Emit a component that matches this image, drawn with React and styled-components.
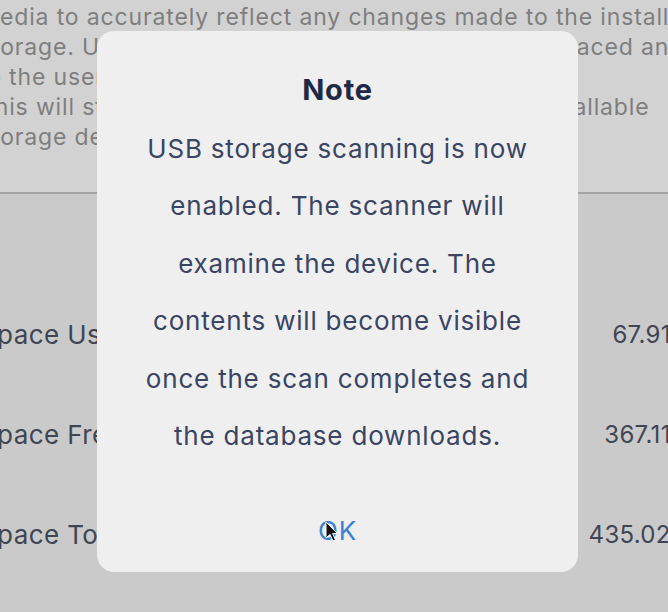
import React from 'react';
import styled, { createGlobalStyle } from 'styled-components';

const GlobalStyle = createGlobalStyle`
  html, body {
    margin: 0;
    padding: 0;
    background: #cacaca;
  }
  body {
    font-family: Inter, "Noto Sans", "Liberation Sans", sans-serif;
  }
`;

// whole screen, clipped like the screenshot
const Screen = styled.div`
  position: relative;
  width: 668px;
  height: 612px;
  overflow: hidden;
  background: #cacaca;
`;

const Page = styled.div`
  display: flex;
  flex-direction: column;
  margin: 0 -48px 0 -21px;
`;

const InfoSection = styled.div`
  background: #d2d2d2;
  padding: 2px 0 40px;
  border-bottom: 2px solid #a3a3a3;
`;

const InfoText = styled.p`
  margin: 0;
  font-size: 23px;
  line-height: 30px;
  letter-spacing: 0.85px;
  color: #7e7e7e;
  white-space: nowrap;
`;

const DriveName = styled.div`
  margin-top: 30px;
  text-align: center;
  font-size: 22px;
  line-height: 30px;
  color: #8a8a8a;
`;

const StatList = styled.div`
  display: flex;
  flex-direction: column;
  margin-top: 30px;
`;

const StatRow = styled.div`
  display: flex;
  align-items: center;
  justify-content: space-between;
  height: 100px;
  padding: 0 4px 0 1px;
`;

const StatLabel = styled.span`
  font-size: 26px;
  letter-spacing: 0.4px;
  color: #3f4553;
`;

const StatValue = styled.span`
  font-size: 24px;
  letter-spacing: 0.3px;
  color: #3f4553;
`;

const Dialog = styled.div`
  position: absolute;
  left: 97px;
  top: 31px;
  width: 481px;
  height: 541px;
  box-sizing: border-box;
  border-radius: 17px;
  background: #efefef;
  display: flex;
  flex-direction: column;
  align-items: center;
  padding-top: 42px;
`;

const Title = styled.h2`
  margin: 0;
  font-size: 29px;
  line-height: 34px;
  font-weight: 700;
  letter-spacing: 0.8px;
  color: #1e2948;
`;

const Message = styled.p`
  margin: 13px 0 0;
  font-size: 26px;
  line-height: 57.4px;
  letter-spacing: 0.8px;
  text-align: center;
  color: #3a4463;
`;

const OkButton = styled.button`
  margin-top: 52px;
  border: none;
  background: none;
  padding: 0;
  font-family: inherit;
  font-size: 26px;
  line-height: 30px;
  letter-spacing: 0.8px;
  color: #3b80d1;
  cursor: pointer;
`;

const Cursor = styled.svg`
  position: absolute;
  left: 325px;
  top: 521px;
`;

const stats = [
  { label: 'Space Used', value: '67.91 GB' },
  { label: 'Space Free', value: '367.11 GB' },
  { label: 'Space Total', value: '435.02 GB' },
];

export default function App() {
  return (
    <>
      <GlobalStyle />
      <Screen>
        <Page>
          <InfoSection>
            <InfoText>media to accurately reflect any changes made to the installed</InfoText>
            <InfoText>storage. Use this, whenever a device has been replaced and</InfoText>
            <InfoText>to the user interface of the unit.</InfoText>
            <InfoText>This will stop all of the running scans of all the installable</InfoText>
            <InfoText>storage devices.</InfoText>
          </InfoSection>
          <DriveName>USB1</DriveName>
          <StatList>
            {stats.map((s) => (
              <StatRow key={s.label}>
                <StatLabel>{s.label}</StatLabel>
                <StatValue>{s.value}</StatValue>
              </StatRow>
            ))}
          </StatList>
        </Page>

        <Dialog>
          <Title>Note</Title>
          <Message>
            USB storage scanning is now
            <br />
            enabled. The scanner will
            <br />
            examine the device. The
            <br />
            contents will become visible
            <br />
            once the scan completes and
            <br />
            the database downloads.
          </Message>
          <OkButton>OK</OkButton>
        </Dialog>

        <Cursor width="14" height="22" viewBox="0 0 14 22">
          <path d="M1 1 L1 17 L5 13.5 L8 20 L10.5 19 L7.6 12.6 L12.5 12.6 Z" fill="#111" stroke="#fff" strokeWidth="1" />
        </Cursor>
      </Screen>
    </>
  );
}
